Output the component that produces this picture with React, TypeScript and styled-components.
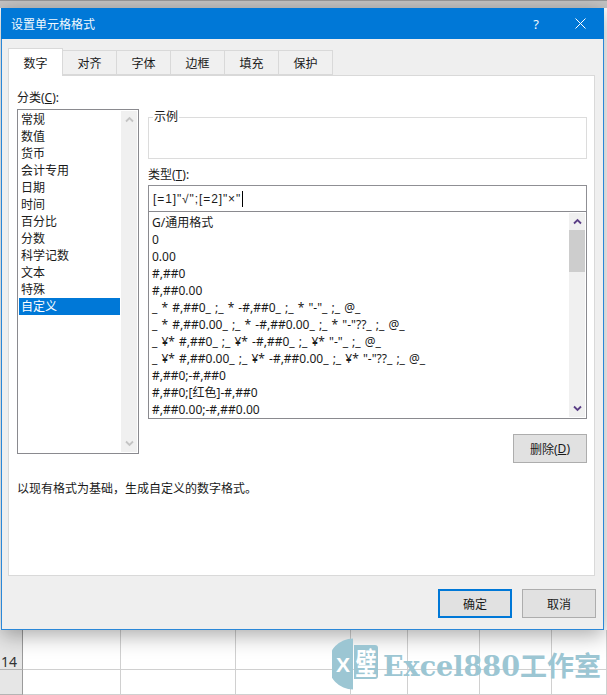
import React from "react";
import styled, { createGlobalStyle } from "styled-components";

const Global = createGlobalStyle`
  html, body { margin: 0; padding: 0; background: #fff; }
  * { box-sizing: border-box; }
`;

const FONT = `"Noto Sans", "Noto Sans CJK SC", sans-serif`;

const Stage = styled.div`
  position: relative;
  width: 607px;
  height: 695px;
  overflow: hidden;
  display: flex;
  flex-direction: column;
  background: #fff;
  font-family: ${FONT};
  font-size: 12px;
  color: #1a1a1a;
`;
const TopStrip = styled.div`
  height: 8px;
  flex: none;
  background: #c4c4c4;
  border-top: 1px solid #9a9a9a;
`;
const Dialog = styled.div`
  flex: none;
  width: 603px;
  height: 622px;
  margin-left: 1px;
  display: flex;
  flex-direction: column;
  background: #efefef;
  border: 1px solid #2b88d8;
  border-top: 0;
  box-shadow: 0 5px 20px rgba(0, 0, 0, 0.34);
  position: relative;
  z-index: 1;
`;
const TitleBar = styled.div`
  height: 31px;
  flex: none;
  margin: 0 -1px;
  padding: 0 18px 0 10px;
  display: flex;
  align-items: center;
  background: #0078d7;
  color: #f2f8fd;
  font-size: 12px;
`;
const Title = styled.span`
  flex: 1;
`;
const HelpMark = styled.span`
  width: 12px;
  margin-right: 33px;
  font-size: 13px;
  text-align: center;
`;
const TabStrip = styled.div`
  display: flex;
  align-items: flex-end;
  height: 36px;
  padding-left: 6px;
  flex: none;
`;
const Tab = styled.div<{ $active?: boolean }>`
  width: ${(p) => (p.$active ? 55 : 54)}px;
  height: ${(p) => (p.$active ? 28 : 25)}px;
  margin-bottom: ${(p) => (p.$active ? -1 : 0)}px;
  display: flex;
  align-items: center;
  justify-content: center;
  background: ${(p) => (p.$active ? "#fff" : "#f0f0f0")};
  border: 1px solid #d9d9d9;
  border-bottom: ${(p) => (p.$active ? "0" : "1px solid #d9d9d9")};
  border-left: ${(p) => (p.$active ? "1px solid #d9d9d9" : "0")};
  position: relative;
  z-index: ${(p) => (p.$active ? 1 : 0)};
`;
const Panel = styled.div`
  width: 587px;
  height: 501px;
  margin-left: 6px;
  flex: none;
  background: #fff;
  border: 1px solid #d9d9d9;
  padding: 13px 7px 0 8px;
  display: flex;
  flex-direction: column;
`;
const Columns = styled.div`
  display: flex;
  gap: 9px;
`;
const LeftColumn = styled.div`
  width: 122px;
  flex: none;
  display: flex;
  flex-direction: column;
`;
const RightColumn = styled.div`
  flex: 1;
  min-width: 0;
  display: flex;
  flex-direction: column;
  padding-top: 22px;
`;
const Label = styled.div`
  height: 20px;
  line-height: 17px;
`;
const U = styled.span`
  text-decoration: underline;
  text-underline-offset: 1px;
`;
const CategoryBox = styled.div`
  height: 345px;
  display: flex;
  border: 1px solid #8a8a8f;
  background: #fff;
  padding: 1px;
`;
const CategoryItems = styled.div`
  flex: 1;
  min-width: 0;
  margin-right: 1px;
`;
const CategoryItem = styled.div<{ $selected?: boolean }>`
  height: 17px;
  line-height: 17px;
  padding-left: 2px;
  background: ${(p) => (p.$selected ? "#0078d7" : "transparent")};
  color: ${(p) => (p.$selected ? "#fff" : "inherit")};
`;
const Track = styled.div`
  width: 16px;
  flex: none;
  display: flex;
  flex-direction: column;
  justify-content: space-between;
  background: #f0f0f0;
`;
const TrackBody = styled.div`
  flex: 1;
`;
const Thumb = styled.div`
  height: 42px;
  background: #cdcdcd;
`;
const ArrowBox = styled.div`
  height: 17px;
  flex: none;
  display: flex;
  align-items: center;
  justify-content: center;
`;
const SampleBox = styled.fieldset`
  height: 48px;
  margin: 0;
  padding: 0 0 0 4px;
  border: 1px solid #dcdcdc;
  flex: none;
`;
const SampleLegend = styled.legend`
  padding: 0 1px;
  line-height: 12px;
  font-size: 12px;
`;
const TypeLabel = styled.div`
  height: 17px;
  line-height: 17px;
  margin-top: 7px;
  margin-bottom: 2px;
`;
const TypeInput = styled.div`
  height: 27px;
  flex: none;
  display: flex;
  align-items: center;
  padding-left: 4px;
  border: 1px solid #8f8f94;
  background: #fff;
  white-space: pre;
  font-family: "Liberation Sans", sans-serif;
  letter-spacing: 0.9px;
`;
const Caret = styled.span`
  width: 1px;
  height: 16px;
  background: #000;
  margin-left: 1px;
`;
const FormatBox = styled.div`
  height: 208px;
  margin-top: -1px;
  flex: none;
  display: flex;
  border: 1px solid #8a8a8f;
  background: #fff;
  padding: 1px;
`;
const FormatItems = styled.div`
  flex: 1;
  min-width: 0;
  padding-top: 1px;
`;
const FormatItem = styled.div`
  height: 17px;
  line-height: 17px;
  padding-left: 2px;
  white-space: pre;
  word-spacing: 1px;
`;
const DeleteRow = styled.div`
  display: flex;
  justify-content: flex-end;
  margin-top: 15px;
`;
const Button = styled.div<{ $primary?: boolean }>`
  width: 74px;
  height: 29px;
  display: flex;
  align-items: center;
  justify-content: center;
  background: #e1e1e1;
  border: ${(p) => (p.$primary ? "2px solid #0078d7" : "1px solid #adadad")};
`;
const Hint = styled.div`
  margin-top: 17px;
  line-height: 17px;
`;
const Footer = styled.div`
  flex: 1;
  display: flex;
  justify-content: flex-end;
  gap: 10px;
  padding: 13px 7px 0 0;
`;
const Sheet = styled.div`
  flex: 1;
  display: grid;
  grid-template-columns: 23px 98px 115px 115px 57px 72px 72px 55px;
  grid-template-rows: 40px 25px;
  background: #fff;
`;
const Cell = styled.div<{ $header?: boolean }>`
  border-right: 1px solid ${(p) => (p.$header ? "#9b9b9b" : "#d0d0d0")};
  border-bottom: 1px solid ${(p) => (p.$header ? "#b4b4b4" : "#d0d0d0")};
  background: ${(p) => (p.$header ? "#e6e6e6" : "#fff")};
  display: flex;
  align-items: flex-end;
  padding-left: 1px;
  font-size: 14px;
  color: #333;
  line-height: 14px;
`;
const Watermark = styled.div`
  position: absolute;
  left: 332px;
  top: 638px;
  height: 52px;
  display: flex;
  align-items: center;
  gap: 4px;
  color: #9cc6d3;
  z-index: 2;
`;
const WatermarkText = styled.span`
  font-family: "DejaVu Serif", "Noto Sans CJK SC", serif;
  font-weight: 700;
  font-size: 27px;
  white-space: pre;
`;

const Chevron = ({ up, color }: { up?: boolean; color: string }) => (
  <svg width="9" height="7" viewBox="0 0 9 7">
    <path d={up ? "M1 5.5 L4.5 2 L8 5.5" : "M1 1.5 L4.5 5 L8 1.5"} fill="none" stroke={color} strokeWidth="1.8" />
  </svg>
);

const CloseIcon = () => (
  <svg width="11" height="11" viewBox="0 0 11 11">
    <path d="M0.5 0.5 L10.5 10.5 M10.5 0.5 L0.5 10.5" stroke="#fff" strokeWidth="1" />
  </svg>
);

const LogoMark = () => (
  <svg width="47" height="52" viewBox="0 0 47 52">
    <path d="M21 0.5 A25 25.5 0 0 0 21 51.5 Z" fill="#9cc6d3" />
    <path d="M22 7 H43 Q46 7 46 10 V38 Q46 41 43 41 H22 Z" fill="#9cc6d3" />
    <text x="11" y="34" fontFamily="Liberation Sans" fontWeight="700" fontSize="21" fill="#fff" textAnchor="middle">X</text>
    <text transform="translate(34 36) scale(1 1.4)" fontFamily="Noto Sans CJK SC" fontWeight="700" fontSize="21" fill="#fff" textAnchor="middle">璧</text>
  </svg>
);

const tabs = ["数字", "对齐", "字体", "边框", "填充", "保护"];
const categories = ["常规", "数值", "货币", "会计专用", "日期", "时间", "百分比", "分数", "科学记数", "文本", "特殊", "自定义"];
const formats = [
  "G/通用格式",
  "0",
  "0.00",
  "#,##0",
  "#,##0.00",
  '_ * #,##0_ ;_ * -#,##0_ ;_ * "-"_ ;_ @_',
  '_ * #,##0.00_ ;_ * -#,##0.00_ ;_ * "-"??_ ;_ @_',
  '_ ¥* #,##0_ ;_ ¥* -#,##0_ ;_ ¥* "-"_ ;_ @_',
  '_ ¥* #,##0.00_ ;_ ¥* -#,##0.00_ ;_ ¥* "-"??_ ;_ @_',
  "#,##0;-#,##0",
  "#,##0;[红色]-#,##0",
  "#,##0.00;-#,##0.00",
];

export default function App() {
  return (
    <Stage>
      <Global />
      <TopStrip />
      <Dialog>
        <TitleBar>
          <Title>设置单元格格式</Title>
          <HelpMark>?</HelpMark>
          <CloseIcon />
        </TitleBar>
        <TabStrip>
          {tabs.map((t, i) => (
            <Tab key={t} $active={i === 0}>{t}</Tab>
          ))}
        </TabStrip>
        <Panel>
          <Columns>
            <LeftColumn>
              <Label>分类(<U>C</U>):</Label>
              <CategoryBox>
                <CategoryItems>
                  {categories.map((c) => (
                    <CategoryItem key={c} $selected={c === "自定义"}>{c}</CategoryItem>
                  ))}
                </CategoryItems>
                <Track>
                  <ArrowBox><Chevron up color="#c4c4c4" /></ArrowBox>
                  <ArrowBox><Chevron color="#c4c4c4" /></ArrowBox>
                </Track>
              </CategoryBox>
            </LeftColumn>
            <RightColumn>
              <SampleBox>
                <SampleLegend>示例</SampleLegend>
              </SampleBox>
              <TypeLabel>类型(<U>T</U>):</TypeLabel>
              <TypeInput>[=1]"√";[=2]"×"<Caret /></TypeInput>
              <FormatBox>
                <FormatItems>
                  {formats.map((f) => (
                    <FormatItem key={f}>{f}</FormatItem>
                  ))}
                </FormatItems>
                <Track>
                  <ArrowBox><Chevron up color="#5b3f86" /></ArrowBox>
                  <Thumb />
                  <TrackBody />
                  <ArrowBox><Chevron color="#5b3f86" /></ArrowBox>
                </Track>
              </FormatBox>
              <DeleteRow>
                <Button>删除(<U>D</U>)</Button>
              </DeleteRow>
            </RightColumn>
          </Columns>
          <Hint>以现有格式为基础，生成自定义的数字格式。</Hint>
        </Panel>
        <Footer>
          <Button $primary>确定</Button>
          <Button>取消</Button>
        </Footer>
      </Dialog>
      <Sheet>
        <Cell $header>14</Cell>
        {Array.from({ length: 7 }, (_, i) => <Cell key={i} />)}
        <Cell $header />
        {Array.from({ length: 7 }, (_, i) => <Cell key={i} />)}
      </Sheet>
      <Watermark>
        <LogoMark />
        <WatermarkText>Excel880工作室</WatermarkText>
      </Watermark>
    </Stage>
  );
}
